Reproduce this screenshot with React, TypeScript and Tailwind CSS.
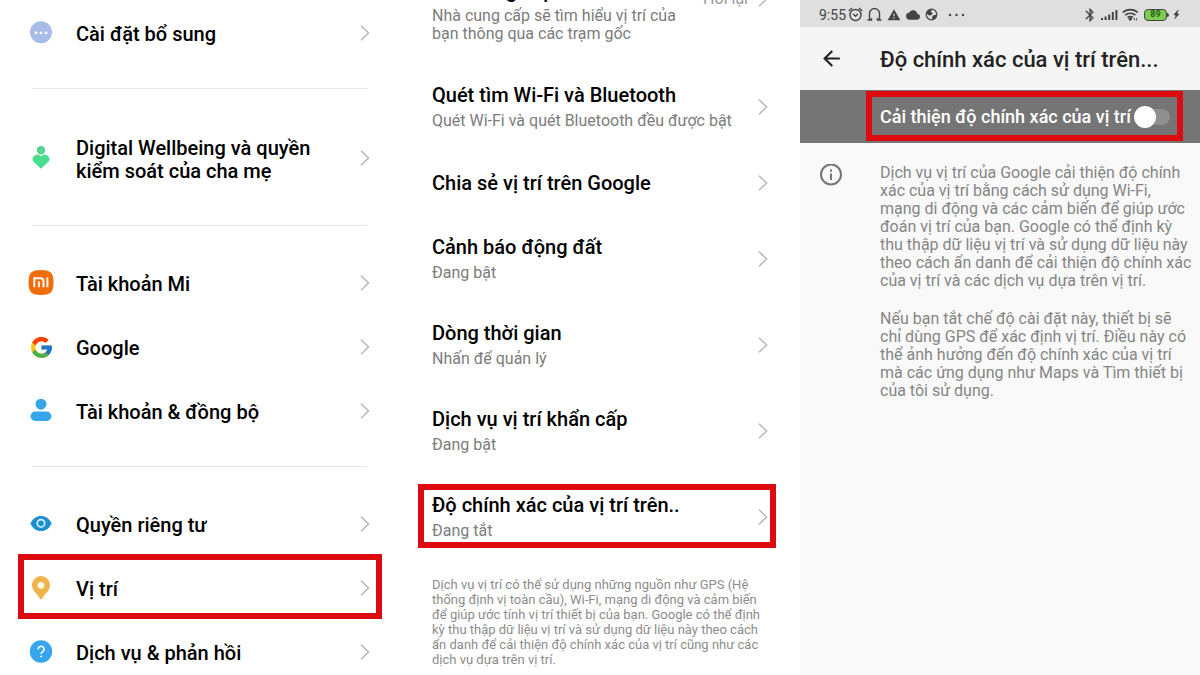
import type { ReactNode } from "react";
import { FcGoogle } from "react-icons/fc";
import { MdArrowBack, MdBluetooth, MdBolt, MdCloud, MdWarning } from "react-icons/md";

function Chevron() {
  return (
    <svg className="h-4 w-[10px] shrink-0" viewBox="0 0 10 16" fill="none" stroke="#b4b4b4" strokeWidth="1.4" aria-hidden="true">
      <path d="M1 0.8L8.6 8L1 15.2" />
    </svg>
  );
}

function HighlightBox({ className }: { className: string }) {
  return <span aria-hidden="true" className={`pointer-events-none absolute border-6 border-[#dd0a0f] ${className}`} />;
}

const MoreIcon = () => (
  <svg viewBox="0 0 26 26" className="w-full">
    <circle cx="13" cy="12.3" r="11" fill="#a9bce6" />
    <circle cx="8" cy="12.8" r="1.4" fill="#fff" />
    <circle cx="13" cy="12.8" r="1.4" fill="#fff" />
    <circle cx="18" cy="12.8" r="1.4" fill="#fff" />
  </svg>
);

const WellbeingIcon = () => (
  <svg viewBox="0 0 26 26" className="w-full">
    <circle cx="13" cy="5.2" r="4.2" fill="#57d492" />
    <path d="M13 23.8L5.8 17.1A4.5 4.5 0 0 1 12.2 10.8L13 11.5L13.8 10.8A4.5 4.5 0 0 1 20.2 17.1Z" fill="#49dd8e" />
  </svg>
);

const MiIcon = () => (
  <svg viewBox="0 0 26 26" className="w-full">
    <path d="M13 0C22.5 0 25.5 2.8 25.5 12.5S22.5 25 13 25S0.5 22.2 0.5 12.5S3.5 0 13 0Z" fill="#ef6d0c" />
    <path d="M6.3 17.2V8.3H12.4C14.6 8.3 15.5 9.3 15.5 11.3V17.2M10.9 11.6V17.2M19.4 7.5V17.2" fill="none" stroke="#fff" strokeWidth="1.9" />
  </svg>
);

const PersonIcon = () => (
  <svg viewBox="0 0 26 26" className="w-full" fill="#36a5ea">
    <circle cx="13" cy="6.2" r="5.5" />
    <rect x="2.6" y="13.6" width="20.8" height="9.4" rx="4.7" />
  </svg>
);

const EyeIcon = () => (
  <svg viewBox="0 0 26 26" className="w-full">
    <path d="M2.5 12.5C4.5 7.5 8.5 5 13 5S21.5 7.5 23.5 12.5C21.5 17.5 17.5 20 13 20S4.5 17.5 2.5 12.5Z" fill="#1b8fd0" />
    <circle cx="13" cy="12.3" r="3.7" fill="none" stroke="#d9f4ff" strokeWidth="1.7" />
  </svg>
);

const PinIcon = () => (
  <svg viewBox="0 0 26 26" className="w-full">
    <path d="M13 1A9 9 0 0 1 22 10C22 15.6 17 18.5 14.6 22.9Q13 25.3 11.4 22.9C9 18.5 4 15.6 4 10A9 9 0 0 1 13 1Z" fill="#efb54c" />
    <circle cx="13" cy="10.3" r="3.4" fill="#fff9e4" />
  </svg>
);

const HelpIcon = () => (
  <svg viewBox="0 0 26 26" className="w-full">
    <circle cx="13" cy="12.5" r="11.2" fill="#38a6ee" />
    <path d="M10.2 10.5A2.9 2.9 0 1 1 14.6 12.7C13.4 13.5 13.1 13.9 13.1 15" fill="none" stroke="#fff" strokeWidth="1.5" />
    <circle cx="13.1" cy="17.5" r="1" fill="#fff" />
  </svg>
);

const GoogleIcon = () => <FcGoogle className="size-[25px]" />;

type Item = { label: string; icon: ReactNode; highlighted?: boolean; tall?: boolean };

const settingsGroups: Item[][] = [
  [{ label: "Cài đặt bổ sung", icon: <MoreIcon /> }],
  [{ label: "Digital Wellbeing và quyền kiểm soát của cha mẹ", icon: <WellbeingIcon />, tall: true }],
  [
    { label: "Tài khoản Mi", icon: <MiIcon /> },
    { label: "Google", icon: <GoogleIcon /> },
    { label: "Tài khoản & đồng bộ", icon: <PersonIcon /> },
  ],
  [
    { label: "Quyền riêng tư", icon: <EyeIcon /> },
    { label: "Vị trí", icon: <PinIcon />, highlighted: true },
    { label: "Dịch vụ & phản hồi", icon: <HelpIcon /> },
  ],
];

function SettingsPanel() {
  return (
    <nav aria-label="Cài đặt" className="overflow-hidden bg-white pt-px">
      {settingsGroups.map((group, index) => (
        <div key={index}>
          {index > 0 && <hr className="mt-[23px] mr-[33px] mb-[25px] ml-8 border-[#e4e4e4]" />}
          <ul>
            {group.map((item) => (
              <li key={item.label}>
                <a href="#" className={`relative flex items-center gap-[22px] pr-[30px] pl-7 ${item.tall ? "h-[88px]" : "h-16"}`}>
                  <span className="flex w-[26px] shrink-0 justify-center">{item.icon}</span>
                  <span className="max-w-[250px] flex-1 pt-[3px] text-[20px] leading-[23px] font-medium text-black">{item.label}</span>
                  <span className="ml-auto">
                    <Chevron />
                  </span>
                  {item.highlighted && <HighlightBox className="-top-0.5 right-[18px] bottom-px left-[18px]" />}
                </a>
              </li>
            ))}
          </ul>
        </div>
      ))}
    </nav>
  );
}

const locationItems: { title: string; detail?: string; highlighted?: boolean }[] = [
  { title: "Quét tìm Wi-Fi và Bluetooth", detail: "Quét Wi-Fi và quét Bluetooth đều được bật" },
  { title: "Chia sẻ vị trí trên Google" },
  { title: "Cảnh báo động đất", detail: "Đang bật" },
  { title: "Dòng thời gian", detail: "Nhấn để quản lý" },
  { title: "Dịch vụ vị trí khẩn cấp", detail: "Đang bật" },
  { title: "Độ chính xác của vị trí trên..", detail: "Đang tắt", highlighted: true },
];

function LocationPanel() {
  return (
    <section aria-label="Vị trí" className="overflow-hidden bg-white">
      <a href="#" className="-mt-[41px] flex items-center gap-[10px] py-5 pr-8 pl-8">
        <span className="flex flex-1 flex-col gap-1">
          <span className="text-[20px] leading-6 font-medium text-black">Nhà cung cấp</span>
          <span className="max-w-[250px] text-[16px] leading-[18px] text-[#7c7c7c]">
            Nhà cung cấp sẽ tìm hiểu vị trí của bạn thông qua các trạm gốc
          </span>
        </span>
        <span className="flex items-center gap-[10px] pb-6 text-[16px] leading-[18px] text-[#9a9a9a]">
          Hỏi lại
          <Chevron />
        </span>
      </a>
      <ul>
        {locationItems.map((item) => (
          <li key={item.title}>
            <a href="#" className="relative flex min-h-[66px] items-center pt-5 pr-8 pb-[19px] pl-8">
              <span className="flex flex-1 flex-col gap-[5px]">
                <span className="text-[20px] leading-6 font-medium text-black">{item.title}</span>
                {item.detail && <span className="text-[16px] leading-[18px] text-[#7c7c7c]">{item.detail}</span>}
              </span>
              <Chevron />
              {item.highlighted && <HighlightBox className="top-[11px] right-6 bottom-[11px] left-[18px]" />}
            </a>
          </li>
        ))}
      </ul>
      <p className="mt-[18px] pr-8 pl-8 text-[13px] leading-[15px] text-[#8c8c8c]">
        Dịch vụ vị trí có thể sử dụng những nguồn như GPS (Hệ thống định vị toàn cầu), Wi-Fi, mạng di động và cảm biến để
        giúp ước tính vị trí thiết bị của bạn. Google có thể định kỳ thu thập dữ liệu vị trí và sử dụng dữ liệu này theo
        cách ẩn danh để cải thiện độ chính xác của vị trí cũng như các dịch vụ dựa trên vị trí.
      </p>
    </section>
  );
}

function StatusBar() {
  return (
    <div className="flex h-[27px] items-center justify-between bg-[#dfdfdf] pt-0.5 pr-[17px] pl-[19px] text-[#444]">
      <div className="flex items-center">
        <span className="text-[14px] leading-4">9:55</span>
        <svg className="ml-0.5 size-[15px]" viewBox="0 0 15 15" fill="none" stroke="currentColor" strokeWidth="1.4">
          <circle cx="7.5" cy="8" r="5.5" />
          <path d="M5 7L7.5 9L10 7M0.8 4L4 1M14.2 4L11 1" />
        </svg>
        <svg className="ml-1 size-[15px]" viewBox="0 0 15 15" fill="none" stroke="currentColor" strokeWidth="1.4">
          <path d="M0.500 13H4.500V11M2.500 12.500V6.500A5 5 0 0 1 12.500 6.500V12.500M14.500 13H10.500V11" />
        </svg>
        <MdWarning className="ml-[5px] size-[14px]" />
        <MdCloud className="ml-[5px] size-[14px]" />
        <svg className="ml-[5px] size-[13px]" viewBox="0 0 13 13">
          <circle cx="6.5" cy="6.5" r="5.300" fill="none" stroke="currentColor" strokeWidth="1.2" />
          <path d="M1.5 5L4 2L7 1.5L6 4L8 5.5L5.5 7.5L3 7ZM8 7.5L11.5 6.5L10.5 10L7.5 11.5L7 9.5Z" fill="currentColor" />
        </svg>
        <svg className="ml-[10px] h-1 w-[17px]" viewBox="0 0 17 4" fill="currentColor">
          <circle cx="2" cy="2" r="1.2" />
          <circle cx="8.5" cy="2" r="1.2" />
          <circle cx="15" cy="2" r="1.2" />
        </svg>
      </div>
      <div className="flex items-center">
        <MdBluetooth className="size-4" />
        <svg className="ml-0.5 h-3 w-[18px]" viewBox="0 0 18 12" fill="currentColor">
          <path d="M1 9h2v2h-2zM4.6 7.500h2v3.500h-2zM8.200 5.500h2v5.500h-2zM11.800 3h2v8h-2zM15.400 1h2v10h-2z" />
        </svg>
        <svg className="ml-1 h-[13px] w-[17px]" viewBox="0 0 17 13" fill="none" stroke="currentColor" strokeWidth="1.7">
          <path d="M0.8 4.5A11 11 0 0 1 15.8 4.5M3.2 7.2A7.6 7.6 0 0 1 13.4 7.2M5.6 9.7A4.2 4.2 0 0 1 11 9.7" />
          <path d="M8.3 9.8L10 11L8.3 12.6L6.6 11ZM12.5 10v2.5M14.7 10v2.5" strokeWidth="0.9" fill="currentColor" />
        </svg>
        <span className="ml-[5px] flex h-3 w-[23px] items-center justify-center rounded-[4px] border border-[#444] bg-[#7ccd4e] text-[9px] leading-[9px] font-bold text-[#256015]">
          89
        </span>
        <span className="h-1 w-0.5 rounded-r-sm bg-[#444]" />
        <MdBolt className="ml-px size-[13px] rotate-12" />
      </div>
    </div>
  );
}

function AccuracyPanel() {
  return (
    <section className="overflow-hidden bg-[#f9f9f9]">
      <StatusBar />
      <header className="flex h-[63px] items-center bg-[#f5f5f5] pl-[19px]">
        <button type="button" aria-label="Quay lại" className="w-[61px] shrink-0">
          <MdArrowBack className="size-[25px] text-[#222]" />
        </button>
        <h1 className="pt-0.5 text-[22px] leading-7 font-medium whitespace-nowrap text-[#222]">Độ chính xác của vị trí trên...</h1>
      </header>
      <label className="relative flex h-[53px] items-center justify-between bg-[#757575] pr-[30px] pl-20">
        <span className="text-[18px] leading-6 font-medium whitespace-nowrap text-white">Cải thiện độ chính xác của vị trí</span>
        <input
          type="checkbox"
          role="switch"
          className="relative h-[22px] w-9 shrink-0 appearance-none before:absolute before:inset-y-[3px] before:right-0 before:left-[5px] before:rounded-full before:bg-[#8f8f8f] after:absolute after:top-0 after:left-0 after:size-[22px] after:rounded-full after:bg-white checked:after:left-[14px]"
        />
        <HighlightBox className="top-px right-[17px] bottom-0.5 left-[66px]" />
      </label>
      <div className="flex pt-[21px] pr-2 pl-[19px]">
        <svg className="mr-[37px] size-6 shrink-0" viewBox="0 0 24 24" fill="none" stroke="#757575" strokeWidth="2" aria-hidden="true">
          <circle cx="12" cy="10.5" r="10" />
          <path d="M12 9.5V16M12 5.5V7.7" />
        </svg>
        <div className="flex flex-col gap-5 text-[16px] leading-[18px] text-[#858585]">
          <p>
            Dịch vụ vị trí của Google cải thiện độ chính xác của vị trí bằng cách sử dụng Wi-Fi, mạng di động và các cảm
            biến để giúp ước đoán vị trí của bạn. Google có thể định kỳ thu thập dữ liệu vị trí và sử dụng dữ liệu này
            theo cách ẩn danh để cải thiện độ chính xác của vị trí và các dịch vụ dựa trên vị trí.
          </p>
          <p>
            Nếu bạn tắt chế độ cài đặt này, thiết bị sẽ chỉ dùng GPS để xác định vị trí. Điều này có thể ảnh hưởng đến
            độ chính xác của vị trí mà các ứng dụng như Maps và Tìm thiết bị của tôi sử dụng.
          </p>
        </div>
      </div>
    </section>
  );
}

export default function App() {
  return (
    <main className="grid h-screen grid-cols-3 overflow-hidden bg-white font-['Roboto','Noto_Sans',sans-serif]">
      <SettingsPanel />
      <LocationPanel />
      <AccuracyPanel />
    </main>
  );
}
